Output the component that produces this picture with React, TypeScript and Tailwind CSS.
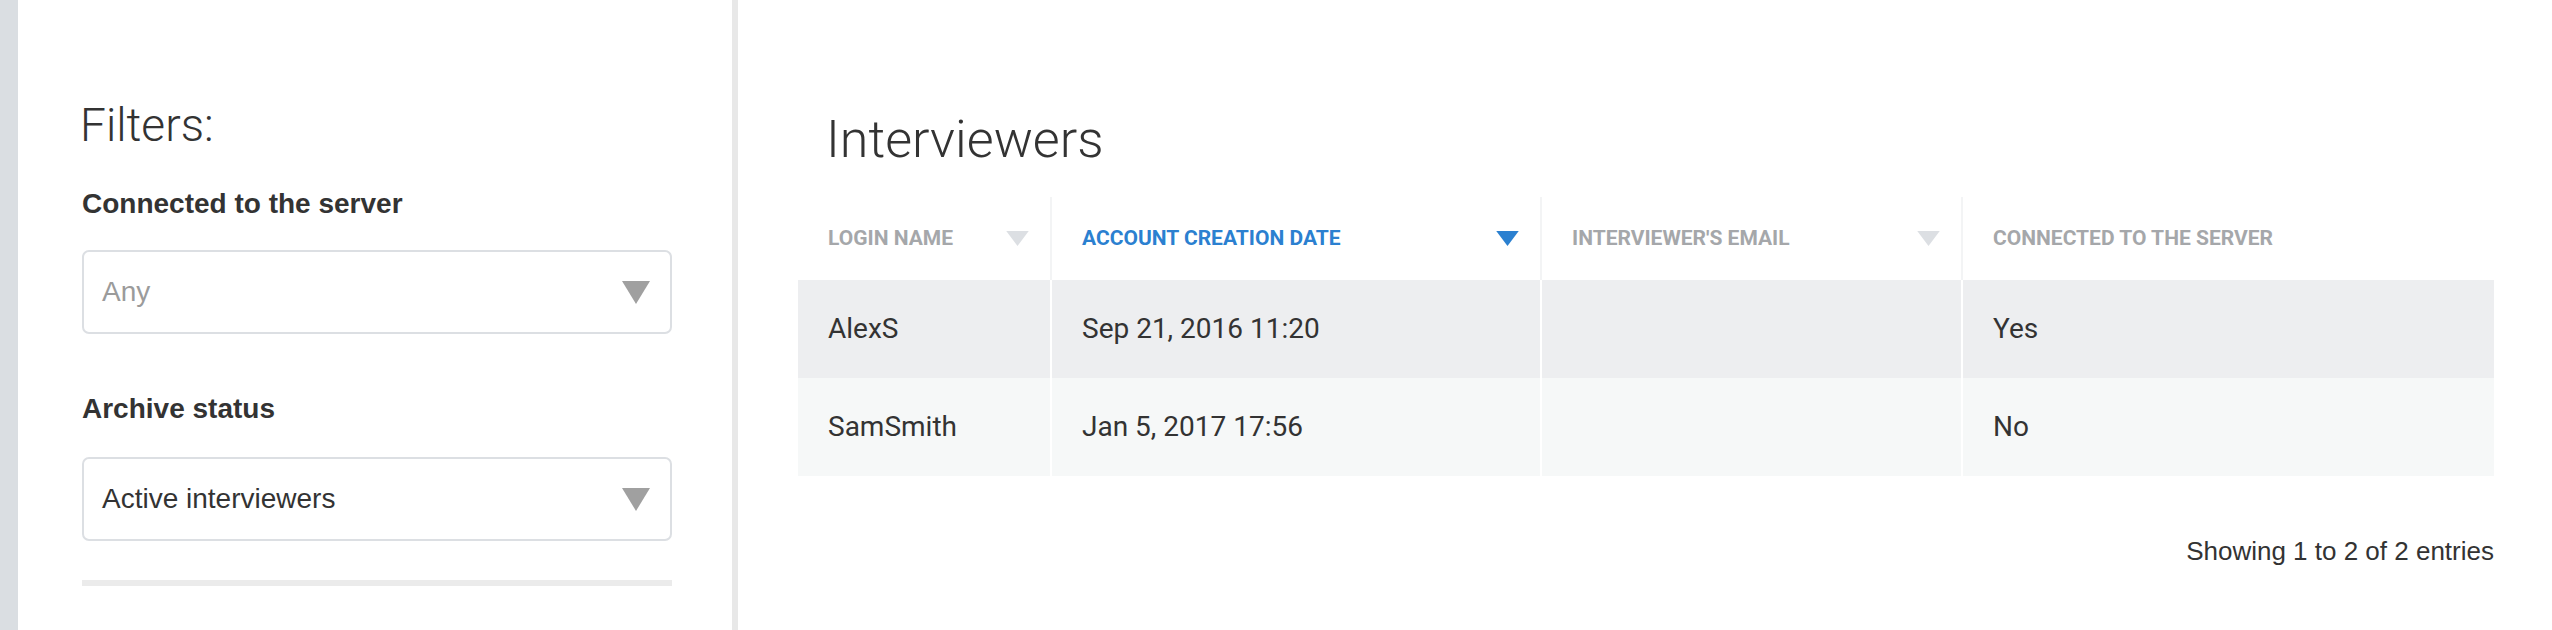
import React from "react";

type Col = { label: string; width: number; active?: boolean; sortable?: boolean };

const columns: Col[] = [
  { label: "Login name", width: 253, sortable: true },
  { label: "Account creation date", width: 490, sortable: true, active: true },
  { label: "Interviewer's email", width: 421, sortable: true },
  { label: "Connected to the server", width: 532 },
];

const rows = [
  { login: "AlexS", created: "Sep 21, 2016 11:20", email: "", connected: "Yes" },
  { login: "SamSmith", created: "Jan 5, 2017 17:56", email: "", connected: "No" },
];

function Caret({ className }: { className: string }) {
  return (
    <svg viewBox="0 0 24 16" className={className}>
      <path d="M0 0 H24 L12 16 Z" fill="currentColor" />
    </svg>
  );
}

function Select({ value, muted }: { value: string; muted?: boolean }) {
  return (
    <div className="flex items-center justify-between h-[84px] border-2 border-[#dcdfe3] rounded-[7px] pl-[18px] pr-[20px] bg-white">
      <span
        className={`text-[28px] leading-none ${muted ? "text-[#9b9b9b]" : "text-[#333]"}`}
        style={{ fontFamily: '"Liberation Sans", Arial, sans-serif' }}
      >
        {value}
      </span>
      <svg viewBox="0 0 28 23" className="w-[28px] h-[23px] text-[#a0a0a0]">
        <path d="M0 0 H28 L14 23 Z" fill="currentColor" />
      </svg>
    </div>
  );
}

export default function App() {
  const arial = { fontFamily: '"Liberation Sans", Arial, sans-serif' };
  const roboto = { fontFamily: "Roboto, sans-serif" };

  return (
    <div className="flex w-[2552px] h-[630px] bg-white overflow-hidden">
      <div className="w-[18px] shrink-0 bg-[#dadee2]" />

      {/* filters sidebar */}
      <aside className="w-[714px] shrink-0 pl-[64px] pr-[60px] pt-[102px]">
        <h2 className="text-[46px] leading-none font-light text-[#333] ml-[-2px]" style={roboto}>
          Filters:
        </h2>
        <div className="mt-[42px] text-[28px] leading-none font-bold text-[#333]" style={arial}>
          Connected to the server
        </div>
        <div className="mt-[32px]">
          <Select value="Any" muted />
        </div>
        <div className="mt-[61px] text-[28px] leading-none font-bold text-[#333]" style={arial}>
          Archive status
        </div>
        <div className="mt-[34px]">
          <Select value="Active interviewers" />
        </div>
        <div className="mt-[39px] h-[6px] bg-[#ebebeb]" />
      </aside>

      <div className="w-[6px] shrink-0 bg-[#e8e8e8]" />

      {/* main */}
      <main className="flex-1 pl-[60px] pr-[58px] pt-[114px]">
        <h1 className="ml-[28px] text-[52px] leading-none font-light text-[#333]" style={roboto}>
          Interviewers
        </h1>

        <table className="mt-[31px] w-full table-fixed border-collapse">
          <colgroup>
            {columns.map((c) => (
              <col key={c.label} style={{ width: c.width }} />
            ))}
          </colgroup>
          <thead>
            <tr className="h-[83px]">
              {columns.map((c, i) => (
                <th
                  key={c.label}
                  className={`p-0 text-left align-middle ${i > 0 ? "border-l-2 border-[#f3f4f5]" : ""}`}
                >
                  <div className="flex items-center justify-between pl-[30px] pr-[21px]">
                    <span
                      className={`uppercase text-[21px] leading-none font-bold ${c.active ? "text-[#2b80d0]" : "text-[#a5a7aa]"}`}
                      style={roboto}
                    >
                      {c.label}
                    </span>
                    {c.sortable && (
                      <Caret
                        className={`w-[23px] h-[15px] ${c.active ? "text-[#2b80d0]" : "text-[#dcdfe3]"}`}
                      />
                    )}
                  </div>
                </th>
              ))}
            </tr>
          </thead>
          <tbody>
            {rows.map((r, idx) => (
              <tr key={r.login} className={`h-[98px] ${idx % 2 === 0 ? "bg-[#edeef0]" : "bg-[#f6f8f8]"}`}>
                {[r.login, r.created, r.email, r.connected].map((v, i) => (
                  <td
                    key={i}
                    className={`p-0 pl-[30px] align-middle text-[28px] leading-none text-[#333] ${i > 0 ? "border-l-2 border-white" : ""}`}
                    style={roboto}
                  >
                    {v}
                  </td>
                ))}
              </tr>
            ))}
          </tbody>
        </table>

        <div className="mt-[62px] text-right text-[26px] leading-none text-[#333]" style={arial}>
          Showing 1 to 2 of 2 entries
        </div>
      </main>
    </div>
  );
}
